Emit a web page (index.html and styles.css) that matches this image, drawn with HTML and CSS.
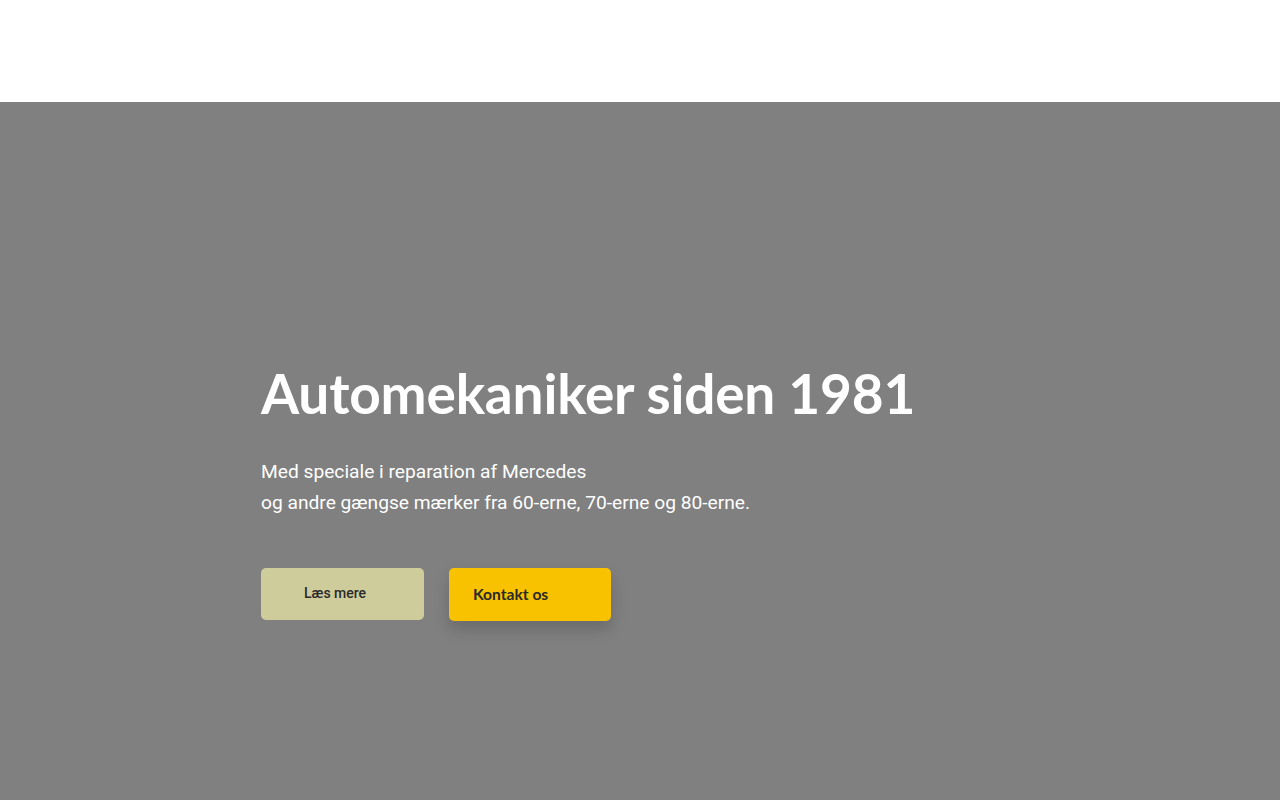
FILE: index.html
```html
<!DOCTYPE html>
<html lang="da">
<head>
<meta charset="utf-8">
<title>Automekaniker</title>
<link rel="stylesheet" href="styles.css">
</head>
<body>
<header class="topbar"></header>
<section class="hero">
  <div class="hero-inner">
    <h1 class="hero-title">Automekaniker siden 1981</h1>
    <p class="hero-text">Med speciale i reparation af Mercedes<br>og andre gængse mærker fra 60-erne, 70-erne og 80-erne.</p>
    <div class="hero-actions">
      <a class="btn btn-read" href="#">Læs mere</a>
      <a class="btn btn-contact" href="#">Kontakt os</a>
    </div>
  </div>
</section>
</body>
</html>
```
FILE: styles.css
```css
* { box-sizing: border-box; }
html, body { margin: 0; padding: 0; }
body { font-family: "Roboto", "Liberation Sans", sans-serif; background: #808080; }
.topbar { height: 102px; background: #ffffff; }
.hero { height: 698px; background: #808080; }
.hero-inner { padding: 258px 0 0 261px; }
.hero-title {
  margin: 0;
  font-family: "Lato", sans-serif;
  font-weight: 700;
  font-size: 55px;
  line-height: 66px;
  letter-spacing: -0.2px;
  color: #ffffff;
}
.hero-text {
  margin: 30px 0 0;
  font-family: "Roboto", sans-serif;
  font-size: 19.2px;
  line-height: 31px;
  color: #ffffff;
}
.hero-actions { display: flex; align-items: flex-start; gap: 25px; margin-top: 50px; }
.btn { display: flex; align-items: center; text-decoration: none; color: #2a2a2a; border-radius: 5px; padding-bottom: 2px; }
.btn-read {
  width: 163px; height: 52px; padding-left: 43px;
  background: #cecc9b;
  font-family: "Roboto", sans-serif; font-weight: 500; font-size: 14px;
}
.btn-contact {
  width: 162px; height: 53px; padding-left: 24px;
  background: #f8c200;
  font-family: "Lato", sans-serif; font-weight: 700; font-size: 15.6px;
  box-shadow: 0 8px 16px rgba(0,0,0,0.18);
}
```
